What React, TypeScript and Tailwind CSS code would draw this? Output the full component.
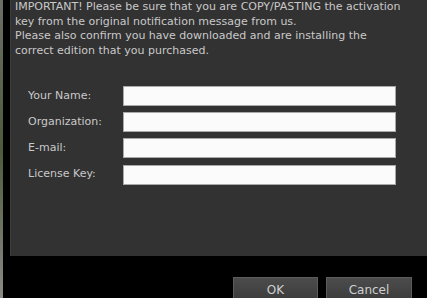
import { useState } from "react";

const FIELDS = [
  { key: "name", label: "Your Name:" },
  { key: "org", label: "Organization:" },
  { key: "email", label: "E-mail:" },
  { key: "license", label: "License Key:" },
];

const App = () => {
  const [values, setValues] = useState<Record<string, string>>({});

  return (
    <div
      className="flex h-[298px] w-[427px] overflow-hidden bg-black text-[11px] text-[#c9c9c9]"
      style={{ fontFamily: '"DejaVu Sans", Verdana, sans-serif' }}
    >
      <div className="w-[3px] shrink-0 bg-gradient-to-b from-[#6c6e66] via-[#4d5a3c] to-[#8a8a86]" />
      <div className="w-[7px] shrink-0 bg-black" />
      <div className="flex min-w-0 flex-1 flex-col">
        <div className="h-[256px] shrink-0 border-l border-[#3d3d3d] bg-[#323232] pl-[4px]">
          <p className="mt-0 whitespace-nowrap leading-[14.7px]">
            IMPORTANT! Please be sure that you are COPY/PASTING the activation
            <br />
            key from the original notification message from us.
            <br />
            Please also confirm you have downloaded and are installing the
            <br />
            correct edition that you purchased.
          </p>
          <div className="mt-[27px] ml-[13px] grid grid-cols-[95px_273px] gap-y-[6.3px]">
            {FIELDS.map((field) => (
              <div key={field.key} className="contents">
                <label className="flex h-[20px] items-center">{field.label}</label>
                <input
                  className="h-[20px] border border-[#a9a9a9] bg-[#fbfbfb] px-1 text-black outline-none"
                  value={values[field.key] ?? ""}
                  onChange={(e) => setValues({ ...values, [field.key]: e.currentTarget.value })}
                />
              </div>
            ))}
          </div>
        </div>
        <div className="flex justify-end gap-[8px] pt-[21px] pr-[15px]">
          <button className="h-[26px] w-[85px] border border-[#5c5c5c] bg-gradient-to-b from-[#4c4c4c] to-[#3a3a3a] text-[12px] text-[#cfcfcf]">
            OK
          </button>
          <button className="h-[26px] w-[86px] border border-[#5c5c5c] bg-gradient-to-b from-[#4c4c4c] to-[#3a3a3a] text-[12px] text-[#cfcfcf]">
            Cancel
          </button>
        </div>
      </div>
    </div>
  );
};

export default App;
